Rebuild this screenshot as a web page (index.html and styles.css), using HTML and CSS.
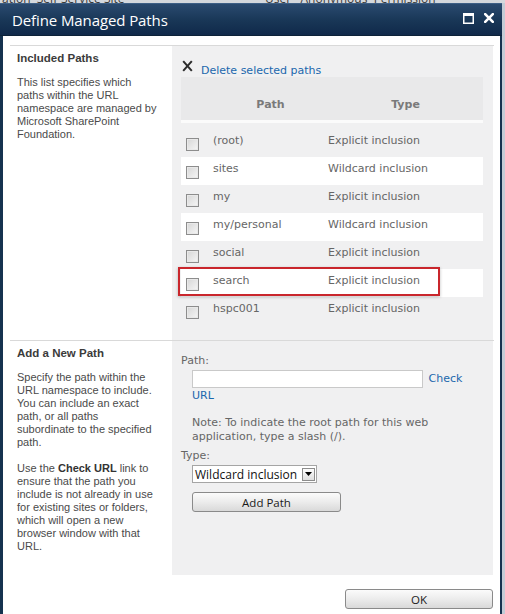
FILE: index.html
```html
<!DOCTYPE html>
<html>
<head>
<meta charset="utf-8">
<title>Define Managed Paths</title>
<link rel="stylesheet" href="styles.css">
</head>
<body>
<div class="backpage"><span class="bp1">ation&nbsp;&nbsp;Self-Service Site</span><span class="bp2">User&nbsp;&nbsp;&nbsp;Anonymous&nbsp;&nbsp;Permission</span></div>
<div class="dialog">
  <div class="titlebar">
    <span class="title">Define Managed Paths</span>
    <span class="tb-icons">
      <svg class="tb-max" width="11" height="11" viewBox="0 0 11 11"><rect x="0.75" y="0.75" width="9.5" height="9.5" fill="none" stroke="#fff" stroke-width="1.5"/><rect x="0" y="0" width="11" height="3" fill="#fff"/></svg>
      <svg class="tb-close" width="10" height="10" viewBox="0 0 10 10"><path d="M1.2 1.2 L8.8 8.8 M8.8 1.2 L1.2 8.8" stroke="#fff" stroke-width="2.6" stroke-linecap="square"/></svg>
    </span>
  </div>
  <div class="content">
    <div class="section">
      <div class="desc">
        <h3>Included Paths</h3>
        <p>This list specifies which<br>paths within the URL<br>namespace are managed by<br>Microsoft SharePoint<br>Foundation.</p>
      </div>
      <div class="panel panel-list">
        <div class="delete">
          <svg class="del-x" width="11" height="12" viewBox="0 0 11 12"><path d="M1.2 1.2 L9.8 10.8 M9.8 1.2 L1.2 10.8" stroke="#2b2b2b" stroke-width="2"/></svg>
          <a href="#" class="link">Delete selected paths</a>
        </div>
        <div class="grid">
          <div class="thead">
            <span></span><span class="th">Path</span><span class="th">Type</span>
          </div>
          <div class="rows">
            <div class="row"><span class="cb"></span><span>(root)</span><span>Explicit inclusion</span></div>
            <div class="row alt"><span class="cb"></span><span>sites</span><span>Wildcard inclusion</span></div>
            <div class="row"><span class="cb"></span><span>my</span><span>Explicit inclusion</span></div>
            <div class="row alt"><span class="cb"></span><span>my/personal</span><span>Wildcard inclusion</span></div>
            <div class="row"><span class="cb"></span><span>social</span><span>Explicit inclusion</span></div>
            <div class="row alt marked"><span class="cb"></span><span>search</span><span>Explicit inclusion</span><span class="mark"></span></div>
            <div class="row"><span class="cb"></span><span>hspc001</span><span>Explicit inclusion</span></div>
          </div>
        </div>
      </div>
    </div>
    <div class="section">
      <div class="desc">
        <h3>Add a New Path</h3>
        <p>Specify the path within the<br>URL namespace to include.<br>You can include an exact<br>path, or all paths<br>subordinate to the specified<br>path.</p>
        <p>Use the <b>Check URL</b> link to<br>ensure that the path you<br>include is not already in use<br>for existing sites or folders,<br>which will open a new<br>browser window with that<br>URL.</p>
      </div>
      <div class="panel panel-form">
        <div class="label">Path:</div>
        <div class="indent inputline"><span class="textbox"></span> <a href="#" class="link">Check URL</a></div>
        <div class="indent note">Note: To indicate the root path for this web<br>application, type a slash (/).</div>
        <div class="label type-label">Type:</div>
        <div class="indent">
          <div class="select"><span class="sel-text">Wildcard inclusion</span><span class="sel-arrow"><svg width="7" height="4" viewBox="0 0 7 4"><path d="M0 0 H7 L3.5 4 Z" fill="#000"/></svg></span></div>
        </div>
        <div class="indent"><span class="button add-btn">Add Path</span></div>
      </div>
    </div>
    <div class="footer"><span class="button ok-btn">OK</span></div>
  </div>
</div>
</body>
</html>
```
FILE: styles.css
```css
html, body {
  margin: 0;
  padding: 0;
}
body {
  background: #c3ccd6;
  width: 505px;
  height: 614px;
  overflow: hidden;
}
.backpage {
  height: 3px;
  overflow: hidden;
  background: #d4d8dd;
  position: relative;
  font: 12px "Open Sans", sans-serif;
  color: #3a3a3a;
}
.backpage span {
  position: absolute;
  top: -10px;
  white-space: nowrap;
}
.bp1 { left: 2px; }
.bp2 { left: 265px; }

.dialog {
  width: 497px;
  height: 620px;
  background: #fff;
  border-left: 3px solid #15324f;
  border-right: 2px solid #15324f;
}
.titlebar {
  height: 33px;
  box-sizing: border-box;
  border-top: 1px solid #3d5f86;
  border-bottom: 1px solid #0d2238;
  background: linear-gradient(#2a4a6f, #183656 55%, #10294a);
  display: flex;
  align-items: center;
  justify-content: space-between;
  padding: 0 8px 0 12px;
  margin-left: -3px;
  margin-right: -2px;
}
.title {
  color: #fff;
  font: 15px "Open Sans", sans-serif;
  letter-spacing: -0.1px;
}
.tb-icons {
  display: flex;
  align-items: center;
  gap: 10px;
  margin-top: -3px;
}
.content {
  padding: 9px 6px 0 7px;
}
.section {
  display: grid;
  grid-template-columns: 162px 321px;
  border-top: 1px solid #d9d9d9;
}
.desc {
  padding: 5px 0 0 7px;
  font: 11px "Liberation Sans", Arial, sans-serif;
  color: #4a4a4a;
}
.desc h3 {
  margin: 0;
  font: bold 11.5px "Liberation Sans", Arial, sans-serif;
  line-height: 14px;
  color: #3b3b3b;
}
.desc p {
  margin: 11px 0 0;
  line-height: 13px;
}
.desc p + p {
  margin-top: 13px;
}
.desc b {
  color: #333;
}
.panel {
  background: #f0f0f1;
  padding: 0 10px 0 9px;
  font: 11px "DejaVu Sans", Verdana, sans-serif;
  color: #666;
}
.panel-list {
  padding-top: 14px;
  padding-bottom: 15px;
}
.delete {
  display: flex;
  align-items: flex-end;
  gap: 8px;
  height: 17px;
  padding-left: 1px;
}
.del-x {
  margin-bottom: 5px;
}
.link {
  color: #1b67ad;
  text-decoration: none;
  font: 11px "DejaVu Sans", Verdana, sans-serif;
  line-height: 13px;
}
.thead {
  display: grid;
  grid-template-columns: 32px 115px 1fr;
  height: 46px;
  box-sizing: border-box;
  padding-top: 21px;
  background: #e9e9ea;
  border-bottom: 3px solid #fbfbfb;
  line-height: 13px;
}
.th {
  text-align: center;
  font-weight: bold;
  color: #7a7a7a;
}
.rows {
  padding-top: 6px;
}
.row {
  position: relative;
  display: grid;
  grid-template-columns: 32px 115px 1fr;
  height: 28px;
  line-height: 13px;
  padding-top: 5px;
  box-sizing: border-box;
}
.row.alt {
  background: #fff;
}
.cb {
  width: 11px;
  height: 11px;
  margin: 4px 0 0 5px;
  border: 1px solid #8d8d8d;
  background: linear-gradient(135deg, #d6d6d6, #f6f6f6);
  box-shadow: inset 0 0 0 1px #e9e9e9;
}
.mark {
  position: absolute;
  left: -3px;
  top: -2px;
  width: 258px;
  height: 25px;
  border: 2px solid #c9262c;
  box-shadow: 0 1px 3px rgba(0,0,0,0.25);
}
.panel-form {
  padding-top: 13px;
  height: 234px;
  box-sizing: border-box;
}
.label {
  line-height: 14px;
}
.indent {
  padding-left: 11px;
}
.inputline {
  margin-top: 2px;
  line-height: 16px;
}
.textbox {
  display: inline-block;
  vertical-align: middle;
  width: 229px;
  height: 16px;
  background: #fff;
  border: 1px solid #c9c9c9;
  margin-right: 2px;
}
.note {
  margin-top: 12px;
  line-height: 14px;
}
.type-label {
  margin-top: 5px;
}
.select {
  margin-top: 2px;
  display: flex;
  align-items: center;
  width: 125px;
  height: 18px;
  box-sizing: border-box;
  background: #fff;
  border: 1px solid #a5a5a5;
  padding: 0 1px 0 2px;
  justify-content: space-between;
}
.sel-text {
  font: 12px "Open Sans", sans-serif;
  color: #111;
  line-height: 15px;
}
.sel-arrow {
  width: 13px;
  height: 13px;
  box-sizing: border-box;
  border: 1px solid #8c8c8c;
  background: linear-gradient(#fdfdfd, #dedede);
  display: flex;
  align-items: center;
  justify-content: center;
}
.button {
  display: flex;
  align-items: center;
  justify-content: center;
  box-sizing: border-box;
  border: 1px solid #8a8a8a;
  border-radius: 3px;
  background: linear-gradient(#fbfbfb, #ececec 50%, #d9d9d9);
  font: 11.5px "Open Sans", sans-serif;
  color: #1a1a1a;
}
.add-btn {
  margin-top: 9px;
  width: 149px;
  height: 20px;
}
.footer {
  display: flex;
  justify-content: flex-end;
  padding: 14px 1px 0 0;
}
.ok-btn {
  width: 148px;
  height: 20px;
}
```
